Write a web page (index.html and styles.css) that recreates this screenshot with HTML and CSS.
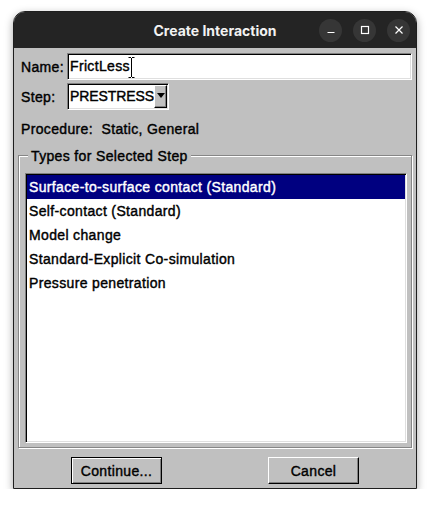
FILE: index.html
```html
<!DOCTYPE html>
<html>
<head>
<meta charset="utf-8">
<link rel="stylesheet" href="styles.css">
</head>
<body>
<div class="window">
  <div class="titlebar">
    <div class="title">Create Interaction</div>
    <div class="controls">
      <span class="ctl"><svg width="16" height="16" viewBox="0 0 16 16"><path d="M4.5 10.5h7" stroke="#fff" stroke-width="1.2" fill="none"/></svg></span>
      <span class="ctl"><svg width="16" height="16" viewBox="0 0 16 16"><rect x="4.5" y="4.5" width="7" height="7" stroke="#fff" stroke-width="1.2" fill="none"/></svg></span>
      <span class="ctl"><svg width="16" height="16" viewBox="0 0 16 16"><path d="M4.5 4.5l7 7M11.5 4.5l-7 7" stroke="#fff" stroke-width="1.2" fill="none"/></svg></span>
    </div>
  </div>
  <div class="content">
    <div class="row">
      <span class="label">Name:</span>
      <div class="field">FrictLess<svg class="ibeam" width="7" height="21" viewBox="0 0 7 21"><path d="M0.5 0.5h2.5M4 0.5h2.5M3.5 1v19M0.5 20.5h2.5M4 20.5h2.5" stroke="#000" stroke-width="1" fill="none"/></svg></div>
    </div>
    <div class="row">
      <span class="label">Step:</span>
      <div class="combo">
        <span class="combo-value">PRESTRESS</span>
        <span class="combo-btn"><span class="tri"></span></span>
      </div>
    </div>
    <div class="proc">Procedure:&nbsp; Static, General</div>
    <div class="group">
      <span class="group-label">Types for Selected Step</span>
      <ul class="list">
        <li class="item selected">Surface-to-surface contact (Standard)</li>
        <li class="item">Self-contact (Standard)</li>
        <li class="item">Model change</li>
        <li class="item">Standard-Explicit Co-simulation</li>
        <li class="item">Pressure penetration</li>
      </ul>
    </div>
    <div class="buttons">
      <button class="btn default">Continue...</button>
      <button class="btn">Cancel</button>
    </div>
  </div>
</div>
</body>
</html>
```
FILE: styles.css
```css
* { box-sizing: border-box; }
html, body { margin: 0; padding: 0; background: #ffffff; }
body {
  font-family: "Liberation Sans", Arial, sans-serif;
  font-size: 14px;
  color: #000;
}
.window {
  margin: 11px 0 0 13px;
  width: 404px;
  height: 478px;
  border: 1px solid #1e1e1e;
  border-radius: 12px 12px 0 0;
  overflow: hidden;
  display: flex;
  flex-direction: column;
  box-shadow: 0 3px 9px rgba(0,0,0,0.35);
}
.titlebar {
  height: 36px;
  flex: none;
  background: #242424;
  display: grid;
  grid-template-columns: 1fr auto 1fr;
  align-items: center;
  padding-right: 6px;
}
.title {
  grid-column: 2;
  font-family: Inter, "Noto Sans", sans-serif;
  font-weight: 700;
  font-size: 14px;
  color: #f2f2f2;
  padding-left: 6px;
}
.controls {
  grid-column: 3;
  justify-self: end;
  display: flex;
  gap: 11px;
}
.ctl {
  width: 23px;
  height: 23px;
  border-radius: 50%;
  background: #363636;
  display: flex;
  align-items: center;
  justify-content: center;
}
.content {
  flex: 1;
  background: #c0c0c0;
  padding: 5px 4px 4px 4px;
  display: flex;
  flex-direction: column;
  letter-spacing: 0.35px;
  -webkit-text-stroke: 0.4px #000;
}
.row {
  display: flex;
  align-items: center;
  height: 27px;
  padding-left: 3px;
}
.row + .row { margin-top: 3px; }
.label { width: 46px; flex: none; }
.field {
  flex: 1;
  height: 27px;
  background: #fff;
  border: 1px solid;
  border-color: #808080 #ffffff #ffffff #808080;
  box-shadow: inset 1px 1px 0 #000, inset -1px -1px 0 #dfdfdf;
  padding-left: 2px;
  line-height: 25px;
  position: relative;
}
.ibeam {
  position: absolute;
  left: 60px;
  top: 3px;
}
.combo {
  width: 102px;
  height: 27px;
  background: #fff;
  border: 1px solid;
  border-color: #808080 #ffffff #ffffff #808080;
  box-shadow: inset 1px 1px 0 #000, inset -1px -1px 0 #dfdfdf;
  padding: 1px;
  display: flex;
  align-items: center;
}
.combo-value { flex: 1; padding-left: 1px; line-height: 23px; letter-spacing: -0.1px; }
.combo-btn {
  width: 13px;
  height: 23px;
  background: #c0c0c0;
  border: 1px solid;
  border-color: #ffffff #000 #000 #ffffff;
  box-shadow: inset -1px -1px 0 #808080;
  display: flex;
  align-items: center;
  justify-content: center;
}
.tri {
  width: 0;
  height: 0;
  border-left: 4px solid transparent;
  border-right: 4px solid transparent;
  border-top: 5px solid #000;
  margin-top: -2px;
}
.proc {
  margin-top: 9px;
  height: 20px;
  line-height: 20px;
  padding-left: 3px;
}
.group {
  margin-top: 16px;
  flex: 1;
  position: relative;
  border: 1px solid #868686;
  box-shadow: inset 1px 1px 0 #fff, 1px 1px 0 #fff;
  padding: 17px 4px 4px 6px;
  display: flex;
  flex-direction: column;
}
.group-label {
  position: absolute;
  left: 9px;
  top: -9px;
  padding: 0 3px;
  line-height: 18px;
  background: #c0c0c0;
}
.list {
  flex: 1;
  margin: 0;
  list-style: none;
  background: #fff;
  border: 1px solid;
  border-color: #808080 #ffffff #ffffff #808080;
  box-shadow: inset 1px 1px 0 #000, inset -1px -1px 0 #dfdfdf;
  padding: 1px;
}
.item {
  height: 24px;
  line-height: 24px;
  padding-left: 2px;
  white-space: nowrap;
}
.item.selected {
  background: #000080;
  color: #fff;
  -webkit-text-stroke: 0.4px #fff;
}
.buttons {
  margin-top: 9px;
  display: flex;
  justify-content: space-around;
}
.btn {
  width: 91px;
  height: 27px;
  font: inherit;
  letter-spacing: inherit;
  color: #000;
  background: #c0c0c0;
  border: 1px solid;
  border-color: #ffffff #000 #000 #ffffff;
  box-shadow: inset -1px -1px 0 #808080;
  padding: 0;
}
.btn.default {
  border-color: #000;
  box-shadow: inset 1px 1px 0 #fff, inset -1px -1px 0 #808080;
}
```
